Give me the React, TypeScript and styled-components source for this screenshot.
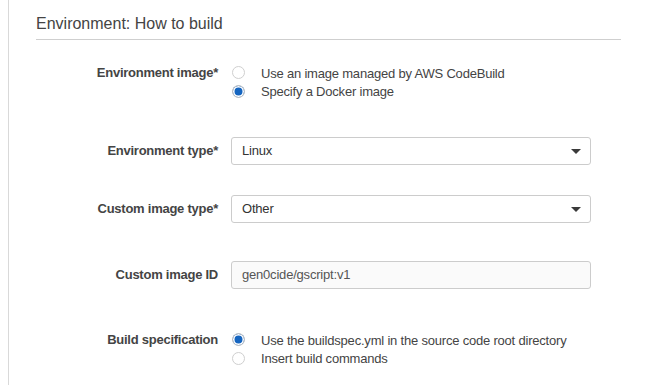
import React from "react";
import styled, { createGlobalStyle } from "styled-components";

const Global = createGlobalStyle`
  html, body { margin: 0; padding: 0; background: #fff; }
  body { font-family: "Liberation Sans", Arial, sans-serif; color: #444; }
  * { box-sizing: border-box; }
`;

const Page = styled.div`
  margin-left: 8px;
  height: 385px;
  border-left: 1px solid #d9d9d9;
  padding-left: 27px;
  overflow: hidden;
`;

const Section = styled.section`
  width: 585px;
`;

const Heading = styled.h2`
  margin: 0;
  padding-top: 14px;
  padding-bottom: 5px;
  font-size: 16px;
  line-height: 20px;
  font-weight: normal;
  color: #444;
  border-bottom: 1px solid #cfcfcf;
`;

const Row = styled.div<{ $top: number; $center?: boolean }>`
  display: grid;
  grid-template-columns: 182px 360px;
  column-gap: 13px;
  align-items: ${(p) => (p.$center ? "center" : "start")};
  margin-top: ${(p) => p.$top}px;
`;

const Label = styled.div`
  text-align: right;
  font-size: 13px;
  letter-spacing: -0.25px;
  line-height: 18.5px;
  font-weight: bold;
  color: #444;
`;

const RadioGroup = styled.div`
  display: flex;
  flex-direction: column;
`;

const RadioLine = styled.label`
  display: flex;
  align-items: center;
  gap: 16px;
  height: 18.5px;
  font-size: 13px;
  letter-spacing: -0.2px;
  color: #444;
`;

const RadioDot = styled.span<{ $checked?: boolean }>`
  width: 13px;
  height: 13px;
  margin-left: 1px;
  border-radius: 50%;
  border: 1px solid ${(p) => (p.$checked ? "#c4c4c4" : "#cfcfcf")};
  background: ${(p) => (p.$checked ? "#1565c0" : "#fff")};
  box-shadow: ${(p) => (p.$checked ? "inset 0 0 0 1.5px #fff" : "none")};
  margin-top: -1px;
  flex: none;
`;

const Field = styled.div<{ $readonly?: boolean }>`
  position: relative;
  display: flex;
  align-items: center;
  height: 28px;
  padding: 0 10px 1px;
  border: 1px solid #cccccc;
  border-radius: 3px;
  background: ${(p) => (p.$readonly ? "#fafafa" : "#fff")};
  font-size: 13px;
  letter-spacing: -0.2px;
  color: ${(p) => (p.$readonly ? "#555" : "#333")};
`;

const Caret = styled.span`
  position: absolute;
  right: 9px;
  top: 50%;
  margin-top: -2px;
  width: 0;
  height: 0;
  border-left: 5px solid transparent;
  border-right: 5px solid transparent;
  border-top: 5px solid #3a3a3a;
`;

type RadioOpt = { text: string; checked?: boolean };

const Radios = ({ options }: { options: RadioOpt[] }) => (
  <RadioGroup>
    {options.map((o) => (
      <RadioLine key={o.text}>
        <RadioDot $checked={o.checked} />
        {o.text}
      </RadioLine>
    ))}
  </RadioGroup>
);

export default function App() {
  return (
    <>
      <Global />
      <Page>
        <Section>
          <Heading>Environment: How to build</Heading>
          <Row $top={24}>
            <Label>Environment image*</Label>
            <Radios
              options={[
                { text: "Use an image managed by AWS CodeBuild" },
                { text: "Specify a Docker image", checked: true },
              ]}
            />
          </Row>
          <Row $top={36} $center>
            <Label>Environment type*</Label>
            <Field>
              Linux
              <Caret />
            </Field>
          </Row>
          <Row $top={30} $center>
            <Label>Custom image type*</Label>
            <Field>
              Other
              <Caret />
            </Field>
          </Row>
          <Row $top={38} $center>
            <Label>Custom image ID</Label>
            <Field $readonly>gen0cide/gscript:v1</Field>
          </Row>
          <Row $top={42}>
            <Label>Build specification</Label>
            <Radios
              options={[
                { text: "Use the buildspec.yml in the source code root directory", checked: true },
                { text: "Insert build commands" },
              ]}
            />
          </Row>
        </Section>
      </Page>
    </>
  );
}
